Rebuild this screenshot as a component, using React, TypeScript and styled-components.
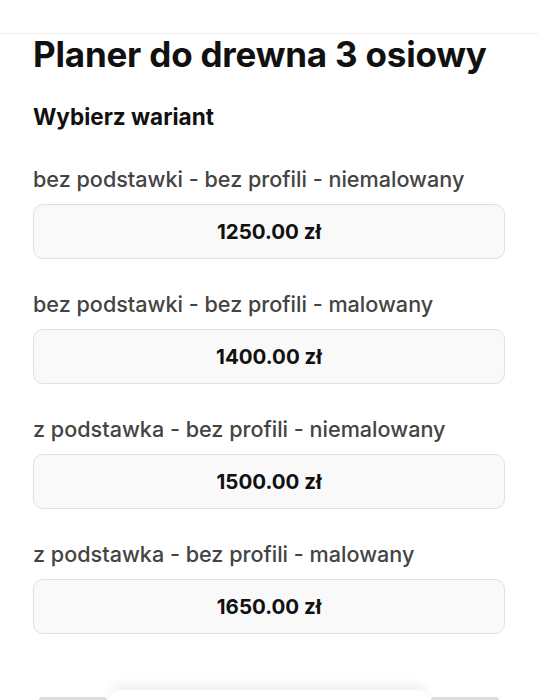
import React from "react";
import styled, { createGlobalStyle } from "styled-components";

const Global = createGlobalStyle`
  html, body { margin: 0; padding: 0; background: #fff; }
  body { font-family: Inter, "Noto Sans", sans-serif; color: #111; -webkit-font-smoothing: antialiased; }
`;

const Page = styled.div`
  width: 538px;
  height: 700px;
  overflow: hidden;
  position: relative;
  background: #fff;
`;

const TopLine = styled.div`
  height: 33px;
  border-bottom: 1px solid #efefef;
`;

const Content = styled.main`
  padding: 0 33px;
  display: flex;
  flex-direction: column;
`;

const Title = styled.h1`
  margin: -2px 0 0;
  font-size: 35px;
  line-height: 44px;
  font-weight: 700;
  letter-spacing: -0.2px;
  color: #111;
`;

const Subtitle = styled.h2`
  margin: 27px 0 0;
  font-size: 22.5px;
  line-height: 28px;
  font-weight: 700;
  color: #111;
`;

const Variant = styled.section`
  display: flex;
  flex-direction: column;
  margin-top: 34px;
  & + & { margin-top: 31px; }
`;

const Label = styled.div`
  font-size: 21.6px;
  line-height: 28px;
  font-weight: 500;
  color: #444;
`;

const PriceBox = styled.button`
  margin-top: 11px;
  height: 55px;
  width: 100%;
  border: 1.5px solid #e0e0e0;
  border-radius: 10px;
  background: #f9f9f9;
  font-family: inherit;
  font-size: 20.5px;
  font-weight: 700;
  color: #111;
  display: flex;
  align-items: center;
  justify-content: center;
`;

const BottomBar = styled.div`
  position: absolute;
  left: 0;
  right: 0;
  bottom: 0;
  height: 12px;
  display: flex;
  justify-content: center;
  align-items: flex-end;
`;

const SideTab = styled.div`
  width: 68px;
  height: 3px;
  background: #ddd;
  border-radius: 3px 3px 0 0;
`;

const Card = styled.div`
  width: 318px;
  height: 10px;
  margin: 0 3px;
  background: #fff;
  border-radius: 14px 14px 0 0;
  box-shadow: 0 -4px 12px rgba(0, 0, 0, 0.08);
`;

const variants = [
  { label: "bez podstawki - bez profili - niemalowany", price: "1250.00 zł" },
  { label: "bez podstawki - bez profili - malowany", price: "1400.00 zł" },
  { label: "z podstawka - bez profili - niemalowany", price: "1500.00 zł" },
  { label: "z podstawka - bez profili - malowany", price: "1650.00 zł" },
];

export default function App() {
  return (
    <Page>
      <Global />
      <TopLine />
      <Content>
        <Title>Planer do drewna 3 osiowy</Title>
        <Subtitle>Wybierz wariant</Subtitle>
        {variants.map((v) => (
          <Variant key={v.label}>
            <Label>{v.label}</Label>
            <PriceBox>{v.price}</PriceBox>
          </Variant>
        ))}
      </Content>
      <BottomBar>
        <SideTab />
        <Card />
        <SideTab />
      </BottomBar>
    </Page>
  );
}
